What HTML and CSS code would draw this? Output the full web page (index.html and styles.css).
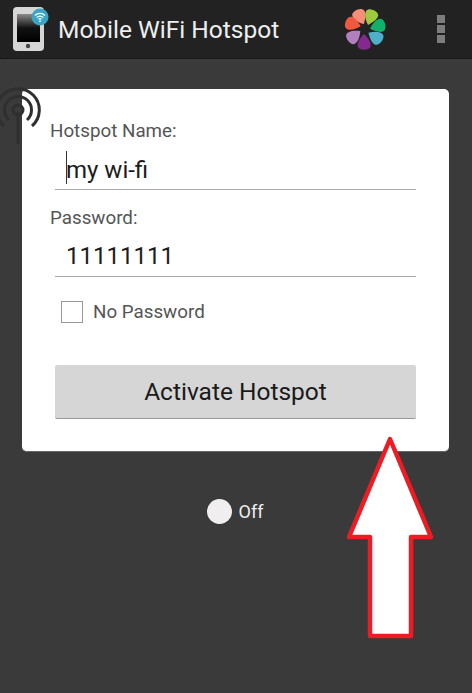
FILE: index.html
```html
<!DOCTYPE html>
<html lang="en">
	<head>
		<meta charset="utf-8">
		<title>Mobile WiFi Hotspot</title>
		<link rel="stylesheet" href="styles.css">
	</head>
	<body>

		<div class="topbar">
			<svg class="appIcon" width="38" height="46" viewBox="0 0 38 46">
				<defs>
					<linearGradient id="screen" x1="0" y1="0" x2="0" y2="1">
						<stop offset="0" stop-color="#8a8a8a"/>
						<stop offset="0.5" stop-color="#111"/>
						<stop offset="1" stop-color="#000"/>
					</linearGradient>
				</defs>
				<rect x="1" y="1" width="31" height="44" rx="4" fill="#d6d6d6"/>
				<rect x="5" y="8" width="23" height="28" fill="url(#screen)"/>
				<circle cx="16" cy="40" r="2.200" fill="#444"/>
				<circle cx="28" cy="11" r="8.500" fill="#3aa6c4"/>
				<g fill="none" stroke="#fff" stroke-width="1.200">
					<path d="M23 9.500a7 7 0 0 1 10 0"/>
					<path d="M24.800 11.500a4.500 4.500 0 0 1 6.400 0"/>
					<path d="M26.500 13.300a2.200 2.200 0 0 1 3 0"/>
				</g>
				<circle cx="28" cy="15.200" r="0.900" fill="#fff"/>
			</svg>
			<div class="appTitle">Mobile WiFi Hotspot</div>
			<svg class="flower" width="46" height="46" viewBox="-23 -23 46 46">
				<path transform="rotate(-23)" d="M1 -5C-4 -9 -7 -13 -6.500 -17C-6 -22 6 -22 6.500 -17C7 -13 4 -9 1 -5Z" fill="#f78f78"/>
				<path transform="rotate(25)" d="M1 -5C-4 -9 -7 -13 -6.500 -17C-6 -22 6 -22 6.500 -17C7 -13 4 -9 1 -5Z" fill="#9ccb3e"/>
				<path transform="rotate(77)" d="M1 -5C-4 -9 -7 -13 -6.500 -17C-6 -22 6 -22 6.500 -17C7 -13 4 -9 1 -5Z" fill="#13b06c"/>
				<path transform="rotate(127)" d="M1 -5C-4 -9 -7 -13 -6.500 -17C-6 -22 6 -22 6.500 -17C7 -13 4 -9 1 -5Z" fill="#4fafc9"/>
				<path transform="rotate(183)" d="M1 -5C-4 -9 -7 -13 -6.500 -17C-6 -22 6 -22 6.500 -17C7 -13 4 -9 1 -5Z" fill="#832a8f"/>
				<path transform="rotate(236)" d="M1 -5C-4 -9 -7 -13 -6.500 -17C-6 -22 6 -22 6.500 -17C7 -13 4 -9 1 -5Z" fill="#b27fbf"/>
				<path transform="rotate(291)" d="M1 -5C-4 -9 -7 -13 -6.500 -17C-6 -22 6 -22 6.500 -17C7 -13 4 -9 1 -5Z" fill="#f2583f"/>
			</svg>
			<div class="overflow">
				<span></span>
				<span></span>
				<span></span>
			</div>
		</div>

		<div class="content">
			<div class="card">
				<div class="fieldLabel">Hotspot Name:</div>
				<div class="field">
					<span class="caret"></span>my wi-fi
				</div>
				<div class="fieldLabel second">Password:</div>
				<div class="field">11111111</div>
				<div class="noPass">
					<span class="check"></span>
					<span>No Password</span>
				</div>
				<div class="activate">Activate Hotspot</div>
			</div>
			<div class="status">
				<span class="dot"></span>
				<span>Off</span>
			</div>
		</div>

		<!-- antena por cima do cartao -->
		<svg class="signal" width="42" height="60" viewBox="0 0 42 60">
			<g fill="none" stroke="#2f2f2f" stroke-width="3">
				<circle cx="18" cy="26" r="5"/>
				<path d="M9 36A13.500 13.500 0 1 1 27 36"/>
				<path d="M4 42A21.300 21.300 0 1 1 32 42"/>
			</g>
			<path d="M18 28V60" stroke="#2f2f2f" stroke-width="3"/>
		</svg>

		<!-- seta vermelha -->
		<svg class="arrow" width="100" height="220" viewBox="340 428 100 220">
			<path d="M390 439L431 537H411V636H370V537H349Z" fill="#fff" stroke="#ed1c24" stroke-width="4.500" stroke-linejoin="round"/>
		</svg>

	</body>
</html>
```

FILE: styles.css
```css
body{
	margin: 0;
	padding: 0;
	height: 693px;
	position: relative;
	overflow: hidden;
	background-color: #3a3a3a;
	font-family: Roboto, "Liberation Sans", sans-serif;
}

.topbar{
	display: flex;
	align-items: center;
	height: 59px;
	padding: 0 27px 0 12px;
	box-sizing: border-box;
	background-color: #222;
	border-bottom: 1px dotted #111;
}

.appIcon{
	margin-right: 8px;
}

.appTitle{
	flex: 1;
	font-size: 24.500px;
	color: #eee;
}

.flower{
	margin-right: 49px;
}

.overflow{
	display: flex;
	flex-direction: column;
	gap: 2px;
}

.overflow span{
	width: 8px;
	height: 8px;
	background-color: #7d7d7d;
}

.content{
	padding: 30px 23px 0 22px;
}

.card{
	height: 363px;
	padding: 30px 33px 0 33px;
	box-sizing: border-box;
	background-color: #fff;
	border-radius: 5px;
	border-bottom: 1px solid #666;
}

.fieldLabel{
	margin-left: -5px;
	font-size: 18.800px;
	line-height: 24px;
	color: #555;
}

.second{
	margin-top: 16px;
}

.field{
	position: relative;
	height: 46px;
	margin-top: 1px;
	padding: 10px 0 0 11px;
	box-sizing: border-box;
	font-size: 24px;
	line-height: 32px;
	color: #1c1c1c;
	border-bottom: 1px solid #aaa;
}

.second + .field{
	padding-top: 9px;
}

.caret{
	position: absolute;
	left: 11px;
	top: 7px;
	width: 1px;
	height: 33px;
	background-color: #333;
}

.noPass{
	display: flex;
	align-items: center;
	margin: 24px 0 0 6px;
	font-size: 18.800px;
	color: #555;
}

.check{
	width: 20px;
	height: 20px;
	margin-right: 10px;
	border: 1px solid #999;
}

.activate{
	height: 54px;
	margin-top: 42px;
	box-sizing: border-box;
	background-color: #d6d6d6;
	border-radius: 2px;
	border-bottom: 1px solid #999;
	font-size: 24.500px;
	line-height: 54px;
	text-align: center;
	color: #1a1a1a;
}

.status{
	display: flex;
	align-items: center;
	justify-content: center;
	gap: 7px;
	margin: 47px 1px 0 0;
	font-size: 18px;
	color: #eee;
}

.dot{
	width: 25px;
	height: 25px;
	border-radius: 50%;
	background-color: #f0eeee;
}

.signal{
	position: absolute;
	left: 0;
	top: 84px;
}

.arrow{
	position: absolute;
	left: 340px;
	top: 428px;
}
```
